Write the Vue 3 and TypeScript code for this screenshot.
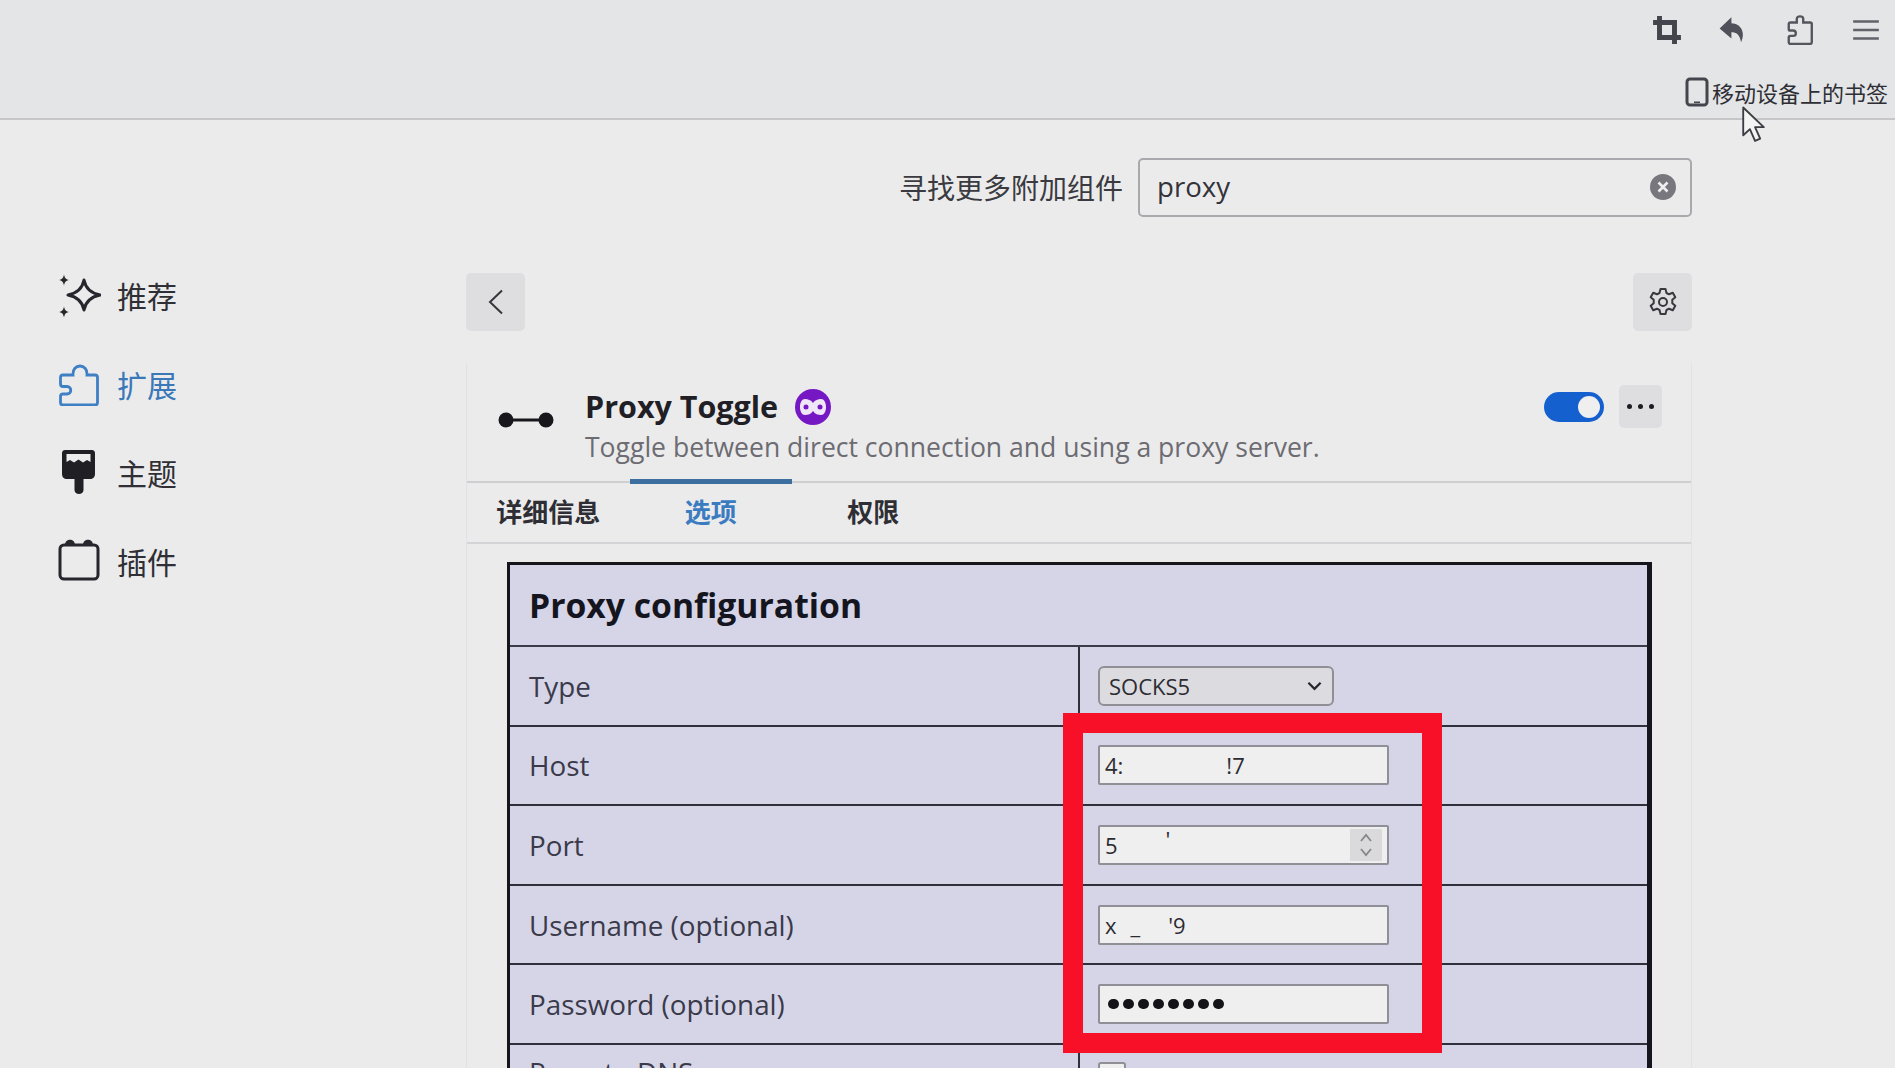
<script setup lang="ts">
const nav = [
  { key: 'rec', label: '推荐', active: false },
  { key: 'ext', label: '扩展', active: true },
  { key: 'theme', label: '主题', active: false },
  { key: 'plugin', label: '插件', active: false },
]
const tabs = [
  { label: '详细信息', active: false },
  { label: '选项', active: true },
  { label: '权限', active: false },
]
</script>

<template>
  <div class="page">
    <header class="toolbar">
      <div class="tool-icons">
        <svg class="tool" viewBox="0 0 28 28"><path d="M7 1v20h20M1 7h20v20" fill="none" stroke="#44444c" stroke-width="4.600"/></svg>
        <svg class="tool" viewBox="0 0 28 28"><path d="M12.500 2 1.500 12.500 12.500 22v-6c4.500 0 8 2 9 9.500 4.500-9 0-17.500-9-17.800z" fill="#50505a"/></svg>
        <svg class="tool" viewBox="0 0 28 28"><path d="M11 3.500c0-3 6-3 6 0V7h6.500c1 0 1.500.6 1.500 1.500v17c0 1-.6 1.500-1.500 1.500H5c-1 0-1.500-.6-1.500-1.500v-4.500c0-1 .6-1.500 1.500-1.500h2.500c3.500 0 3.500-5 0-5H4.800c-.9 0-1.300-.5-1.300-1.300V8.500C3.500 7.500 4 7 5 7h6z" fill="none" stroke="#55555d" stroke-width="2.200"/></svg>
        <svg class="tool" viewBox="0 0 28 28"><path d="M2 6h24M2 14h24M2 22h24" stroke="#62626a" stroke-width="2.400"/></svg>
      </div>
      <div class="bookmarks">
        <svg class="phone" viewBox="0 0 24 30"><rect x="2" y="2" width="20" height="26" rx="3" fill="none" stroke="#45454d" stroke-width="3"/><rect x="9" y="24.500" width="6" height="1.600" fill="#45454d"/></svg>
        <span>移动设备上的书签</span>
      </div>
    </header>

    <svg class="cursor" viewBox="0 0 24 36"><path d="M2 1.500v27l6.500-6 5 11.500 5-2.200-5-11.200h8.500z" fill="#f4f4f4" stroke="#3c3c42" stroke-width="1.800" stroke-linejoin="round"/></svg>

    <div class="search-row">
      <label class="search-label">寻找更多附加组件</label>
      <div class="search-box">
        <span class="search-text">proxy</span>
        <svg class="clear" viewBox="0 0 26 26"><circle cx="13" cy="13" r="13" fill="#77777d"/><path d="M8.500 8.500l9 9M17.500 8.500l-9 9" stroke="#efefef" stroke-width="2.600"/></svg>
      </div>
    </div>

    <div class="body">
      <nav class="side">
        <a v-for="n in nav" :key="n.key" class="nav-item" :class="{ on: n.active }">
          <svg v-if="n.key === 'rec'" class="nav-ic" viewBox="0 0 44 44"><path d="M27 7c1.500 8 6 13 16 15-10 2-14.500 7-16 15-1.500-8-6-13-16-15 10-2 14.500-7 16-15z" fill="none" stroke="#26262c" stroke-width="3" stroke-linejoin="round"/><path d="M7 1.500c.8 3.500 1.500 4.700 5 5.500-3.500.8-4.200 2-5 5.500-.8-3.500-1.500-4.700-5-5.500 3.500-.8 4.200-2 5-5.500zM7 33.500c.8 3.500 1.500 4.700 5 5.500-3.500.8-4.200 2-5 5.500-.8-3.500-1.500-4.700-5-5.500 3.500-.8 4.200-2 5-5.500z" fill="#26262c"/></svg>
          <svg v-else-if="n.key === 'ext'" class="nav-ic" viewBox="0 0 44 44"><path d="M16 13c-1-12 15-12 14 0h8c1.500 0 2.500 1 2.500 2.500V40.500c0 1.500-1 2.500-2.500 2.500H6c-1.500 0-2.500-1-2.500-2.500v-6c0-1.500 1-2.500 2.500-2.500h4c5 0 5-7.500 0-7.500H6c-1.500 0-2.500-1-2.500-2.500v-6.500c0-1.500 1-2.500 2.500-2.500z" fill="none" stroke="#3f7fc4" stroke-width="2.800"/></svg>
          <svg v-else-if="n.key === 'theme'" class="nav-ic" viewBox="0 0 44 44"><path d="M8 0h27c1.500 0 3 1 3 3v21c0 3-2 5-5 5h-6.500v11c0 5.300-9 5.300-9 0V29H10c-3 0-5-2-5-5V3C5 1 6.500 0 8 0z" fill="#1f1f24"/><path d="M9.500 4h24v8l-3.500-2-4 2.500-4.500-3-4.500 3-4-2.500-3.500 2z" fill="#ececec"/></svg>
          <svg v-else class="nav-ic" viewBox="0 0 44 44"><rect x="3" y="6" width="38" height="34" rx="4" fill="none" stroke="#26262c" stroke-width="3"/><path d="M8 6c0-7 10-7 10 0zM26 6c0-7 10-7 10 0z" fill="#26262c"/></svg>
          <span>{{ n.label }}</span>
        </a>
      </nav>

      <main class="main">
        <div class="top-actions">
          <button class="sq-btn">
            <svg viewBox="0 0 28 28" width="28" height="28"><path d="M20 2.500 8 14l12 11.500" fill="none" stroke="#35353b" stroke-width="2"/></svg>
          </button>
          <button class="sq-btn">
            <svg viewBox="0 0 32 32" width="32" height="32"><path d="M13.500 3h5l1 4 2.500 1.300 3.800-1.500 2.500 4.400-3 2.500v3.600l3 2.500-2.500 4.400-3.800-1.500-2.500 1.300-1 4h-5l-1-4-2.500-1.300-3.800 1.500-2.500-4.400 3-2.500v-3.600l-3-2.500 2.500-4.400L10 8.300l2.500-1.300z" fill="none" stroke="#38383e" stroke-width="2" stroke-linejoin="round"/><circle cx="16" cy="16" r="4" fill="none" stroke="#38383e" stroke-width="2"/></svg>
          </button>
        </div>

        <section class="card">
          <div class="card-head">
            <svg class="ext-logo" viewBox="0 0 58 20"><circle cx="9" cy="10" r="7.500" fill="#18181c"/><circle cx="49" cy="10" r="7.500" fill="#18181c"/><path d="M12 10h34" stroke="#18181c" stroke-width="3"/></svg>
            <div class="ext-info">
              <div class="ext-title">
                <span>Proxy Toggle</span>
                <svg class="badge" viewBox="0 0 36 36"><circle cx="18" cy="18" r="18" fill="#7518c4"/><path d="M18 14c-2-3-5-4-8-4-3 0-5 3.500-5 8s2 8 5 8c3 0 6-1 8-4 2 3 5 4 8 4 3 0 5-3.500 5-8s-2-8-5-8c-3 0-6 1-8 4z" fill="#efe6f8"/><circle cx="11" cy="18" r="2.500" fill="#7518c4"/><circle cx="25" cy="18" r="2.500" fill="#7518c4"/></svg>
              </div>
              <p class="ext-desc">Toggle between direct connection and using a proxy server.</p>
            </div>
            <div class="ext-ctrl">
              <span class="switch"><i></i></span>
              <button class="more"><b></b><b></b><b></b></button>
            </div>
          </div>

          <div class="tabs">
            <div v-for="t in tabs" :key="t.label" class="tab" :class="{ on: t.active }">{{ t.label }}</div>
          </div>

          <div class="panel">
            <table class="cfg">
              <thead>
                <tr><th colspan="2">Proxy configuration</th></tr>
              </thead>
              <tbody>
                <tr>
                  <td>Type</td>
                  <td class="val">
                    <div class="select"><span>SOCKS5</span>
                      <svg viewBox="0 0 16 10" width="15" height="10"><path d="M1.500 1.500 8 8l6.500-6.500" fill="none" stroke="#26262c" stroke-width="2.400"/></svg>
                    </div>
                  </td>
                </tr>
                <tr>
                  <td>Host</td>
                  <td class="val"><div class="field"><span>4:</span><span class="gap-a">!7</span></div></td>
                </tr>
                <tr>
                  <td>Port</td>
                  <td class="val">
                    <div class="field"><span>5</span><span class="gap-b">'</span>
                      <span class="spin">
                        <svg viewBox="0 0 14 28" width="14" height="28"><path d="M2 10l5-6 5 6M2 18l5 6 5-6" fill="none" stroke="#85858b" stroke-width="1.800"/></svg>
                      </span>
                    </div>
                  </td>
                </tr>
                <tr>
                  <td>Username (optional)</td>
                  <td class="val"><div class="field"><span>x</span><span class="gap-c">_</span><span class="gap-d">'9</span></div></td>
                </tr>
                <tr>
                  <td>Password (optional)</td>
                  <td class="val"><div class="field dots"><i v-for="n in 8" :key="n"></i></div></td>
                </tr>
                <tr class="last">
                  <td>Remote DNS</td>
                  <td class="val"><span class="check"></span></td>
                </tr>
              </tbody>
            </table>
            <div class="highlight"></div>
          </div>
        </section>
      </main>
    </div>
  </div>
</template>

<style>
html, body { margin: 0; background: #ebebec; overflow: hidden; }
</style>

<style scoped>
.page {
  position: relative;
  width: 1895px;
  height: 1068px;
  overflow: hidden;
  background: #ebebec;
  color: #26262c;
  font-family: "Open Sans", "Noto Sans CJK SC", sans-serif;
}
.toolbar {
  height: 120px;
  box-sizing: border-box;
  background: #e4e5e6;
  border-bottom: 2px solid #c6c6c8;
  padding-right: 7px;
  display: flex;
  flex-direction: column;
  align-items: flex-end;
}
.tool-icons {
  display: flex;
  gap: 36.500px;
  padding: 15px 7px 0 0;
}
.tool { width: 30px; height: 30px; }
.bookmarks {
  display: flex;
  align-items: center;
  gap: 3px;
  margin-top: 32px;
  font-size: 22px;
  line-height: 30px;
  color: #2e2e35;
  font-family: "Noto Sans CJK SC", sans-serif;
}
.phone { width: 24px; height: 30px; }
.cursor {
  position: absolute;
  left: 1741px;
  top: 106px;
  width: 25px;
  height: 37px;
}
.search-row {
  display: flex;
  align-items: center;
  justify-content: flex-end;
  gap: 15px;
  padding: 38px 203px 0 0;
}
.search-label {
  font-family: "Noto Sans CJK SC", sans-serif;
  font-size: 28px;
  color: #3a3a40;
  margin-top: -2px;
}
.search-box {
  width: 554px;
  height: 59px;
  box-sizing: border-box;
  border: 2px solid #a9a9ad;
  border-radius: 5px;
  display: flex;
  align-items: center;
  justify-content: space-between;
  padding: 0 14px 0 17px;
}
.search-text { font-size: 27.600px; color: #33333a; margin-top: -3px; }
.clear { width: 26px; height: 26px; margin-top: -1px; }
.body { display: flex; padding-top: 56px; }
.side {
  width: 466px;
  flex: none;
  box-sizing: border-box;
  margin-top: -2px;
  padding: 0 0 0 57px;
  display: flex;
  flex-direction: column;
  gap: 40px;
}
.nav-item {
  height: 48.500px;
  display: flex;
  align-items: center;
  gap: 16px;
  font-size: 30px;
  font-family: "Noto Sans CJK SC", sans-serif;
  color: #2f2f35;
}
.nav-item.on { color: #3a78b8; }
.nav-ic { width: 44px; height: 44px; }
.main { width: 1226px; flex: none; }
.top-actions { display: flex; justify-content: space-between; }
.sq-btn {
  width: 59px;
  height: 58px;
  padding: 0;
  border: 0;
  border-radius: 5px;
  background: #dedee0;
  display: flex;
  align-items: center;
  justify-content: center;
}
.card {
  margin-top: 32px;
  border-left: 1px solid #e2e2e4;
  border-right: 1px solid #e2e2e4;
}
.card-head {
  height: 119.500px;
  box-sizing: border-box;
  border-bottom: 2px solid #cfcfd2;
  display: flex;
  align-items: flex-start;
  padding: 21px 29px 0 30px;
}
.ext-logo { width: 58px; height: 20px; margin-top: 26px; flex: none; }
.ext-info { margin-left: 30px; flex: 1; }
.ext-title {
  display: flex;
  align-items: center;
  gap: 17px;
  font-size: 30.500px;
  line-height: 44px;
  font-weight: 700;
  color: #1f1f25;
}
.badge { width: 36px; height: 36px; margin-top: 1px; }
.ext-desc {
  margin: 0;
  font-size: 26.550px;
  line-height: 38px;
  color: #6c6c72;
}
.ext-ctrl { display: flex; align-items: center; gap: 15px; margin-top: 1px; }
.switch {
  width: 60px;
  height: 30px;
  border-radius: 15px;
  background: #1560cf;
  position: relative;
}
.switch i {
  position: absolute;
  right: 4px;
  top: 4px;
  width: 22px;
  height: 22px;
  border-radius: 50%;
  background: #efefef;
}
.more {
  width: 43px;
  height: 43px;
  border: 0;
  border-radius: 5px;
  background: #dedee0;
  display: flex;
  align-items: center;
  justify-content: center;
  gap: 6px;
  padding: 0;
}
.more b { width: 5px; height: 5px; border-radius: 50%; background: #1c1c22; }
.tabs {
  height: 61px;
  box-sizing: border-box;
  border-bottom: 2px solid #d4d4d7;
  display: flex;
}
.tab {
  width: 162.500px;
  text-align: center;
  font-family: "Noto Sans CJK SC", sans-serif;
  font-size: 26px;
  font-weight: 700;
  line-height: 56px;
  color: #2e2e34;
  position: relative;
}
.tab.on { color: #3b7cc0; }
.tab.on::before {
  content: "";
  position: absolute;
  left: 0;
  right: 0;
  top: -4px;
  height: 5px;
  background: #3c6f9f;
}
.panel { position: relative; padding: 18px 0 0 40px; }
.cfg {
  width: 1145px;
  table-layout: fixed;
  border-collapse: collapse;
  background: #d5d5e7;
  border: 3px solid #15151c;
  border-right-width: 5px;
  color: #3a3a4a;
}
.cfg th {
  height: 80.500px;
  padding: 0 0 0 19px;
  text-align: left;
  font-size: 33.700px;
  font-weight: 700;
  color: #15151f;
  border-bottom: 2px solid #3b3b49;
}
.cfg td {
  height: 79.600px;
  box-sizing: border-box;
  padding: 0 0 0 19px;
  font-size: 27.800px;
  border-bottom: 2px solid #30303c;
  border-right: 2px solid #30303c;
}
.cfg td.val { padding-left: 18px; border-right: 0; }
.cfg .last td { vertical-align: top; padding-top: 8px; }
.cfg .last td.val { padding-top: 17px; }
.select, .field {
  box-sizing: border-box;
  height: 40px;
  border: 2px solid #8f8f95;
  display: flex;
  align-items: center;
  font-family: "Open Sans", sans-serif;
  color: #2b2b31;
  font-size: 22px;
}
.select {
  width: 236px;
  border-radius: 6px;
  background: #dcdce0;
  padding: 0 10px 0 9px;
  justify-content: space-between;
}
.field {
  width: 291px;
  border-radius: 2px;
  background: #efefef;
  padding: 0 5px;
  position: relative;
}
.gap-a { margin-left: 103px; }
.gap-b { margin-left: 48px; margin-top: -12px; }
.gap-c { margin-left: 14px; }
.gap-d { margin-left: 28px; }
.spin {
  position: absolute;
  right: 5px;
  top: 2px;
  width: 32px;
  height: 32px;
  background: #dadadc;
  display: flex;
  align-items: center;
  justify-content: center;
}
.dots { gap: 4.500px; padding-left: 8px; }
.dots i { width: 10.500px; height: 10.500px; border-radius: 50%; background: #141418; }
.check {
  display: block;
  width: 24px;
  height: 24px;
  border: 2px solid #8f8f95;
  border-radius: 3px;
  background: #efefef;
}
.highlight {
  position: absolute;
  left: 596px;
  top: 169px;
  width: 339px;
  height: 300px;
  border: 20px solid #f81028;
  pointer-events: none;
}
</style>
